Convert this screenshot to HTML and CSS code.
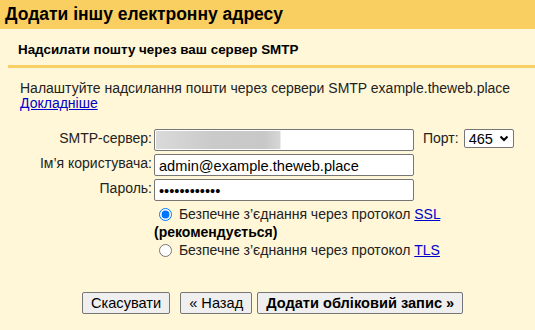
FILE: index.html
```html
<!doctype html>
<html>

<head>
  <meta charset="utf-8">
  <title>Додати іншу електронну адресу</title>
  <link rel="stylesheet" href="styles.css">
</head>

<body>

  <div class="dialog">
    <h1 class="title">Додати іншу електронну адресу</h1>

    <div class="body">
      <h2 class="section">Надсилати пошту через ваш сервер SMTP</h2>

      <div class="content">
        <p class="intro">Налаштуйте надсилання пошти через сервери SMTP example.theweb.place<br>
          <a href="#">Докладніше</a></p>

        <div class="form">
          <label class="label" for="smtp">SMTP-сервер:</label>
          <input class="field blurred" id="smtp" type="text" value="">
          <div class="port">
            <label for="port">Порт:</label>
            <span class="select-wrap">
              <select id="port" class="select">
                <option>465</option>
                <option>587</option>
                <option>25</option>
              </select>
              <svg class="chevron" width="10" height="7" viewBox="0 0 10 7">
                <polyline points="1.5 1.5 5 5 8.5 1.5" fill="none" stroke="#000" stroke-width="2"/>
              </svg>
            </span>
          </div>

          <label class="label" for="user">Ім’я користувача:</label>
          <input class="field" id="user" type="text" value="admin@example.theweb.place">
          <div></div>

          <label class="label" for="pass">Пароль:</label>
          <input class="field" id="pass" type="password" value="example12345">
          <div></div>

          <div></div>
          <div class="options">
            <label class="option">
              <input type="radio" name="secure" checked>
              Безпечне з’єднання через протокол <a href="#">SSL</a>
              <b>(рекомендується)</b>
            </label>
            <label class="option">
              <input type="radio" name="secure">
              Безпечне з’єднання через протокол <a href="#">TLS</a>
            </label>
          </div>
        </div>

        <div class="actions">
          <button class="btn btn-cancel">Скасувати</button>
          <button class="btn">« Назад</button>
          <button class="btn btn-main">Додати обліковий запис »</button>
        </div>
      </div>
    </div>
  </div>

</body>

</html>
```

FILE: styles.css
```css
* {
  box-sizing: border-box;
}

html,
body {
  margin: 0;
  height: 100%;
}

body {
  background: #fff7d7;
  font-family: "Liberation Sans", Arial, sans-serif;
  font-size: 14px;
  color: #222;
}

.title {
  margin: 0;
  height: 29px;
  line-height: 29px;
  padding-left: 5px;
  background: #f9cf62;
  color: #000;
  font-size: 17.5px;
  font-weight: bold;
}

.body {
  padding-left: 8px;
}

.section {
  margin: 0;
  padding: 13px 0 8px 10px;
  border-bottom: 3px solid #f8d066;
  color: #000;
  font-size: 13.4px;
  font-weight: bold;
}

.content {
  padding-left: 12px;
}

.intro {
  margin: 13px 0 0;
  line-height: 15px;
}

a {
  color: #0000cc;
}

.form {
  display: grid;
  grid-template-columns: 132px 260px auto;
  column-gap: 2px;
  row-gap: 3px;
  margin-top: 18px;
  align-items: start;
}

.label {
  text-align: right;
  line-height: 18px;
}

.field {
  height: 22px;
  margin: 0;
  padding: 1px 4px 0;
  border: 1px solid #767676;
  border-radius: 2px;
  background: #fff;
  font-family: "Liberation Sans", Arial, sans-serif;
  font-size: 14.6px;
  color: #000;
}

.blurred {
  background:
    linear-gradient(90deg, #dadada 0, #cacaca 45%, #c8c8c8 85%, #d6d6d6 97%, transparent 97.5%) 1px 1px / 128px 18px no-repeat,
    #fff;
}

.port {
  display: flex;
  align-items: center;
  gap: 5px;
  margin-left: 7px;
  line-height: 19px;
}

.select-wrap {
  position: relative;
  display: inline-block;
}

.select {
  appearance: none;
  -webkit-appearance: none;
  width: 50px;
  height: 19px;
  margin: 0;
  padding: 0 0 0 4px;
  border: 1px solid #767676;
  border-radius: 2px;
  background: #fff;
  font-family: "Liberation Sans", Arial, sans-serif;
  font-size: 14.6px;
  color: #000;
}

.chevron {
  position: absolute;
  right: 5px;
  top: 6px;
  pointer-events: none;
}

.options {
  grid-column: 2 / 4;
  padding-top: 1px;
}

.option {
  display: block;
  line-height: 18px;
}

.option input {
  margin: 0 3px 0 5px;
  vertical-align: -2px;
}

.option b {
  color: #000;
}

.actions {
  display: flex;
  margin-top: 33px;
  padding-left: 62px;
}

.btn {
  height: 22px;
  margin: 0 5px 0 0;
  padding: 0 8px;
  border: 1px solid #767676;
  border-radius: 2px;
  background: #efefef;
  font-family: "Liberation Sans", Arial, sans-serif;
  font-size: 14.6px;
  color: #000;
}

.btn-cancel {
  margin-right: 10px;
}

.btn-main {
  font-weight: bold;
}
```
